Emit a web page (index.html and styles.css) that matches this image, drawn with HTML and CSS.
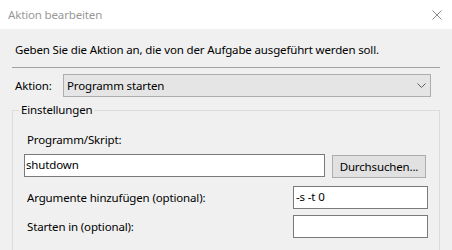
FILE: index.html
```html
<!DOCTYPE html>
<html lang="de">
<head>
    <meta charset="UTF-8">
    <meta name="viewport" content="width=device-width, initial-scale=1.0">
    <title>Aktion bearbeiten</title>
    <link rel="stylesheet" href="styles.css">
</head>
<body>
    <div class="titlebar">
        <span class="title">Aktion bearbeiten</span>
        <svg class="close" width="10" height="10" viewBox="0 0 10 10">
            <path d="M0.5 0.5L9.5 9.5M9.5 0.5L0.5 9.5" stroke="#8c8c8c" stroke-width="1" fill="none"/>
        </svg>
    </div>

    <div class="content">
        <p class="intro">Geben Sie die Aktion an, die von der Aufgabe ausgeführt werden soll.</p>
        <div class="separator"></div>

        <div class="action-row">
            <label class="action-label">Aktion:</label>
            <div class="combo">
                <span>Programm starten</span>
                <svg width="9" height="5" viewBox="0 0 9 5">
                    <path d="M0.5 0.5L4.5 4.5L8.5 0.5" stroke="#606060" stroke-width="1" fill="none"/>
                </svg>
            </div>
        </div>

        <fieldset class="settings">
            <legend>Einstellungen</legend>
            <label class="field-label">Programm/Skript:</label>
            <div class="program-row">
                <input type="text" class="textbox wide" value="shutdown">
                <button class="browse">Durchsuchen...</button>
            </div>
            <div class="option-row">
                <label>Argumente hinzufügen (optional):</label>
                <input type="text" class="textbox short" value="-s -t 0">
            </div>
            <div class="option-row last">
                <label>Starten in (optional):</label>
                <input type="text" class="textbox short" value="">
            </div>
        </fieldset>
    </div>
</body>
</html>
```

FILE: styles.css
```css
body {
    margin: 0;
    font-family: "Noto Sans", sans-serif;
    font-size: 11.5px;
    letter-spacing: -0.15px;
    line-height: 16px;
    color: #000;
    background: #f0f0f0;
    overflow: hidden;
}
.titlebar {
    height: 29px;
    background: #fff;
    display: flex;
    align-items: center;
    justify-content: space-between;
    padding: 0 10px 0 8px;
}
.title {
    color: #999;
}
.content {
    padding: 13px 12px 0 12px;
}
.intro {
    margin: 0 0 9px 3px;
}
.separator {
    height: 1px;
    background: #a0a0a0;
}
.action-row {
    display: flex;
    align-items: center;
    margin-top: 6px;
    padding-left: 3px;
}
.action-label {
    flex: 0 0 48px;
}
.combo {
    width: 368px;
    height: 23px;
    box-sizing: border-box;
    display: flex;
    align-items: center;
    justify-content: space-between;
    padding: 0 4px 0 3px;
    border: 1px solid #adadad;
    background: #e5e5e5;
}
.settings {
    margin: 5px 0 0;
    padding: 0 0 20px;
    border: 1px solid #dcdcdc;
    min-width: 0;
}
.settings legend {
    padding: 0 2px;
    margin-left: 6px;
}
.field-label {
    display: block;
    margin: 14px 0 0 14px;
}
.program-row {
    display: flex;
    align-items: flex-start;
    margin: 6px 0 0 11px;
}
.textbox {
    height: 23px;
    box-sizing: border-box;
    border: 1px solid #7a7a7a;
    background: #fff;
    padding: 0 2px 2px;
    margin: 0;
    font: inherit;
    letter-spacing: inherit;
    color: #000;
    outline: none;
}
.wide {
    width: 301px;
    padding-left: 1px;
}
.short {
    width: 135px;
}
.browse {
    width: 94px;
    height: 23px;
    margin: 1px 0 0 7px;
    padding: 0;
    border: 1px solid #adadad;
    background: #e1e1e1;
    font: inherit;
    letter-spacing: inherit;
    color: #000;
}
.option-row {
    display: flex;
    align-items: center;
    justify-content: space-between;
    margin: 8px 11px 0 14px;
}
.option-row label {
    padding-top: 1px;
}
.option-row.last {
    margin-top: 6px;
}
```
